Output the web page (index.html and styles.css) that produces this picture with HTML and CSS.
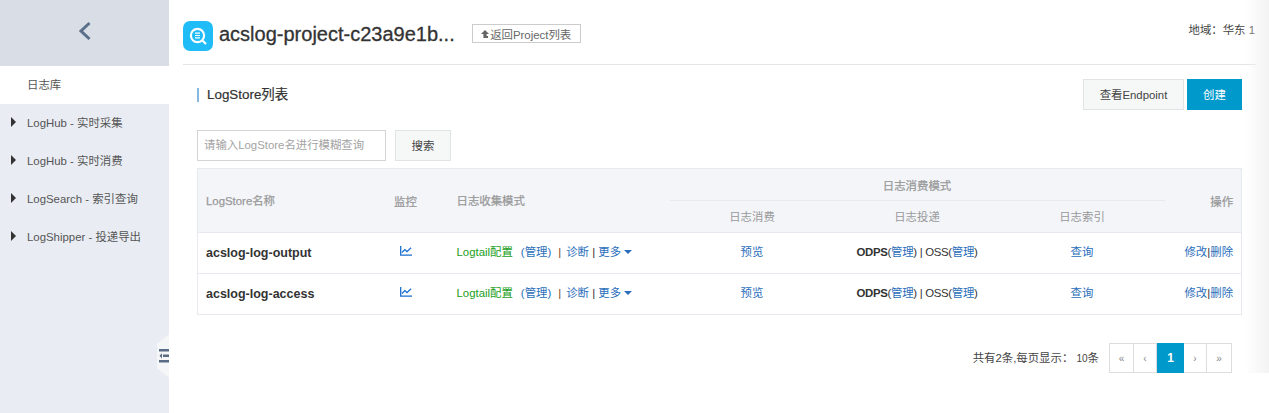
FILE: index.html
```html
<!DOCTYPE html>
<html lang="en">
<head>
  <meta charset="UTF-8" />
  <title>LogStore列表</title>
  <link rel="stylesheet" href="styles.css">
</head>

<body>

  <div class="layout">

    <!-- sidebar -->
    <aside class="sidebar">
      <div class="side-top">
        <svg width="14" height="20" viewBox="0 0 14 20"><path d="M11.5 2 L3 10 L11.5 18" fill="none" stroke="#5b6f8a" stroke-width="3"/></svg>
      </div>
      <a class="side-item active">日志库</a>
      <a class="side-item"><i class="arrow"></i>LogHub - 实时采集</a>
      <a class="side-item"><i class="arrow"></i>LogHub - 实时消费</a>
      <a class="side-item"><i class="arrow"></i>LogSearch - 索引查询</a>
      <a class="side-item"><i class="arrow"></i>LogShipper - 投递导出</a>
      <div class="side-toggle">
        <svg width="10" height="14" viewBox="0 0 10 14">
          <rect x="0" y="0" width="10" height="2.5" fill="#5a6b85"/>
          <rect x="4" y="5.5" width="6" height="2.5" fill="#5a6b85"/>
          <path d="M3 4.2 L0.5 6.8 L3 9.4 Z" fill="#5a6b85"/>
          <rect x="0" y="11" width="10" height="2.5" fill="#5a6b85"/>
        </svg>
      </div>
    </aside>

    <main class="main">

      <div class="page-head">
        <svg class="logo" width="30" height="30" viewBox="0 0 30 30">
          <rect width="30" height="30" rx="7" fill="#1fbcf8"/>
          <circle cx="14.5" cy="14.5" r="6.6" fill="none" stroke="#fff" stroke-width="2.2"/>
          <path d="M12 12.2 H17 M12 14.5 H17 M12 16.8 H17" stroke="#fff" stroke-width="1.2"/>
          <path d="M19.5 19.5 L23 23" stroke="#fff" stroke-width="2.2"/>
        </svg>
        <h1 class="project-name">acslog-project-c23a9e1b...</h1>
        <a class="back-btn">
          <svg width="8" height="8" viewBox="0 0 8 8"><path d="M4 0 L8 4 H5.6 V6 H7 V8 H2.4 V4 H0 Z" fill="#666"/></svg>返回Project列表
        </a>
        <span class="region">地域：华东 1</span>
      </div>

      <div class="content">
        <div class="section-head">
          <h2 class="section-title">LogStore列表</h2>
          <div class="section-actions">
            <a class="btn">查看Endpoint</a>
            <a class="btn btn-primary">创建</a>
          </div>
        </div>

        <div class="search-row">
          <input class="search-input" type="text" placeholder="请输入LogStore名进行模糊查询">
          <a class="btn search-btn">搜索</a>
        </div>

        <table class="store-table">
          <colgroup>
            <col class="col-name"><col class="col-mon"><col class="col-mode">
            <col class="col-sub"><col class="col-sub"><col class="col-sub"><col class="col-op">
          </colgroup>
          <thead>
            <tr class="head-top">
              <th rowspan="2" class="left">LogStore名称</th>
              <th rowspan="2">监控</th>
              <th rowspan="2" class="left">日志收集模式</th>
              <th colspan="3" class="group">日志消费模式</th>
              <th rowspan="2" class="right">操作</th>
            </tr>
            <tr class="head-sub">
              <th>日志消费</th>
              <th>日志投递</th>
              <th>日志索引</th>
            </tr>
          </thead>
          <tbody>
            <tr>
              <td class="store-name">acslog-log-output</td>
              <td class="center"><svg class="chart" width="12" height="10" viewBox="0 0 12 10"><path d="M0.7 0 V9.2 H12" fill="none" stroke="#1a6fd0" stroke-width="1.3"/><path d="M2 6.5 L4.8 3.6 L7 5.6 L11 1.8" fill="none" stroke="#1a6fd0" stroke-width="1.3"/></svg></td>
              <td><span class="green">Logtail配置</span><a class="link manage">(管理)</a><span class="sep">|</span><a class="link">诊断</a> | <a class="link">更多<i class="caret"></i></a></td>
              <td class="center"><a class="link">预览</a></td>
              <td class="center ship"><b>ODPS</b>(<a class="link">管理</a>) | OSS(<a class="link">管理</a>)</td>
              <td class="center"><a class="link">查询</a></td>
              <td class="right"><a class="link">修改</a>|<a class="link">删除</a></td>
            </tr>
            <tr>
              <td class="store-name">acslog-log-access</td>
              <td class="center"><svg class="chart" width="12" height="10" viewBox="0 0 12 10"><path d="M0.7 0 V9.2 H12" fill="none" stroke="#1a6fd0" stroke-width="1.3"/><path d="M2 6.5 L4.8 3.6 L7 5.6 L11 1.8" fill="none" stroke="#1a6fd0" stroke-width="1.3"/></svg></td>
              <td><span class="green">Logtail配置</span><a class="link manage">(管理)</a><span class="sep">|</span><a class="link">诊断</a> | <a class="link">更多<i class="caret"></i></a></td>
              <td class="center"><a class="link">预览</a></td>
              <td class="center ship"><b>ODPS</b>(<a class="link">管理</a>) | OSS(<a class="link">管理</a>)</td>
              <td class="center"><a class="link">查询</a></td>
              <td class="right"><a class="link">修改</a>|<a class="link">删除</a></td>
            </tr>
          </tbody>
        </table>

        <div class="pager-row">
          <span class="pager-info">共有2条,每页显示： <span class="small">10</span>条</span>
          <div class="pager">
            <a class="page wide">«</a>
            <a class="page">‹</a>
            <a class="page current">1</a>
            <a class="page">›</a>
            <a class="page wide">»</a>
          </div>
        </div>
      </div>

    </main>
  </div>

  <div class="edge-fade"></div>

</body>
</html>
```

FILE: styles.css
```css
* {
  box-sizing: border-box;
}

html, body {
  margin: 0;
  height: 413px;
  overflow: hidden;
}

body {
  background-color: #fff;
  color: #333;
  font-family: "Liberation Sans", "Noto Sans CJK SC", sans-serif;
  font-size: 11.4px;
}

.layout {
  display: flex;
  height: 413px;
}

/* sidebar */
.sidebar {
  position: relative;
  width: 169px;
  flex: none;
  background-color: #e9edf3;
}

.side-top {
  height: 66px;
  background-color: #d9dee6;
  display: flex;
  align-items: center;
  justify-content: center;
  padding-bottom: 4px;
}

.side-item {
  display: flex;
  align-items: center;
  height: 38px;
  padding-left: 27px;
  padding-bottom: 3px;
  color: #555;
  position: relative;
}

.side-item.active {
  background-color: #fff;
}

.arrow {
  position: absolute;
  left: 11px;
  top: 13px;
  border-left: 5px solid #333;
  border-top: 5px solid transparent;
  border-bottom: 5px solid transparent;
}

.side-toggle {
  position: absolute;
  right: 0;
  top: 334px;
  width: 12px;
  height: 44px;
  background-color: #f4f6f8;
  clip-path: polygon(0 22%, 100% 0, 100% 100%, 0 78%);
  display: flex;
  align-items: center;
  justify-content: flex-end;
}

/* main */
.main {
  flex: 1;
  padding: 0 13px 0 14px;
  min-width: 0;
}

.page-head {
  display: flex;
  align-items: center;
  height: 65px;
  padding-top: 7px;
  border-bottom: 1px solid #e4e4e4;
}

.logo {
  flex: none;
}

.project-name {
  margin: 0 17px 0 6px;
  font-size: 20px;
  font-weight: normal;
  color: #333;
  -webkit-text-stroke: 0.3px #333;
  position: relative;
  top: -1px;
}

.back-btn {
  display: flex;
  align-items: center;
  justify-content: center;
  gap: 1px;
  width: 109px;
  height: 19px;
  border: 1px solid #ccc;
  color: #666;
  position: relative;
  top: -2px;
}

.region {
  margin-left: auto;
  padding-bottom: 13px;
  padding-right: 1px;
  color: #444;
}

.content {
  padding: 14px 14px 0;
}

.section-head {
  display: flex;
  align-items: center;
  justify-content: space-between;
  height: 31px;
}

.section-title {
  margin: 0;
  padding-left: 8px;
  border-left: 2px solid #88b7e0;
  font-size: 13.4px;
  line-height: 14px;
  font-weight: normal;
  color: #333;
  -webkit-text-stroke: 0.2px #333;
}

.section-actions {
  display: flex;
  gap: 3px;
}

.btn {
  display: flex;
  align-items: center;
  justify-content: center;
  height: 31px;
  width: 101px;
  background-color: #f6f7f7;
  border: 1px solid #e1e4e6;
  color: #444;
  padding-bottom: 2px;
}

.btn-primary {
  width: 55px;
  background-color: #0099cc;
  border-color: #0099cc;
  color: #fff;
}

.search-row {
  display: flex;
  gap: 9px;
  margin-top: 20px;
}

.search-input {
  width: 189px;
  height: 31px;
  padding: 0 6px 2px;
  border: 1px solid #d5d5d5;
  font: inherit;
  outline: none;
}

.search-input::placeholder {
  color: #a3a3a3;
}

.search-btn {
  width: 56px;
}

.store-table {
  width: 1044px;
  margin-top: 7px;
  border-collapse: collapse;
  table-layout: fixed;
  border: 1px solid #e6e9ef;
}

.col-name { width: 165px; }
.col-mon { width: 86px; }
.col-mode { width: 221px; }
.col-sub { width: 165px; }
.col-op { width: 77px; }

.store-table th {
  background-color: #f3f5f9;
  color: #999;
  font-weight: normal;
  padding: 0 8px;
  text-align: center;
}

.store-table thead th {
  -webkit-text-stroke: 0.25px #999;
}

.store-table .head-sub th {
  -webkit-text-stroke: 0;
  padding-bottom: 2px;
}

.head-top {
  height: 32px;
}

.head-sub {
  height: 32px;
}

.store-table th.group {
  border-bottom: 1px solid #e6e9ef;
}

.store-table th.left {
  text-align: left;
  padding-bottom: 2px;
}

.store-table .right {
  text-align: right;
  padding-right: 8px;
}

.store-table td {
  height: 41px;
  padding: 0 8px 4px;
  border-top: 1px solid #e6e9ef;
  color: #333;
  white-space: nowrap;
}

.store-table td.center {
  text-align: center;
}

.store-table td.ship {
  letter-spacing: -0.3px;
}

.store-table td.store-name {
  font-size: 12.5px;
  font-weight: bold;
  padding-bottom: 1px;
}

.chart {
  display: block;
  margin: 0 auto;
}

.link {
  color: #2a6ebb;
}

.green {
  color: #1a9e1a;
}

.manage {
  margin-left: 8px;
}

.sep {
  margin: 0 5px 0 7px;
  color: #7a4a2a;
}

.caret {
  display: inline-block;
  margin-left: 3px;
  vertical-align: 2px;
  border-top: 4px solid #2a6ebb;
  border-left: 4px solid transparent;
  border-right: 4px solid transparent;
}

.pager-row {
  display: flex;
  justify-content: flex-end;
  align-items: center;
  gap: 10px;
  margin-top: 28px;
  padding-right: 10px;
}

.pager-info {
  color: #444;
  padding-bottom: 2px;
}

.small {
  font-size: 10px;
}

.pager {
  display: flex;
  height: 30px;
  border: 1px solid #ddd;
}

.page {
  display: flex;
  align-items: center;
  justify-content: center;
  width: 23px;
  border-right: 1px solid #ddd;
  color: #888;
  font-size: 10px;
}

.page:last-child {
  border-right: none;
}

.page.wide {
  width: 24px;
}

.page.current {
  width: 27px;
  margin: -1px 0;
  background-color: #0099cc;
  border-right: none;
  color: #fff;
  font-size: 12px;
  font-weight: bold;
}

/* soft shade along the right edge */
.edge-fade {
  position: absolute;
  top: 0;
  right: 0;
  width: 24px;
  height: 373px;
  background: linear-gradient(to right, rgba(243, 243, 243, 0), #f3f3f3);
  pointer-events: none;
}
```
